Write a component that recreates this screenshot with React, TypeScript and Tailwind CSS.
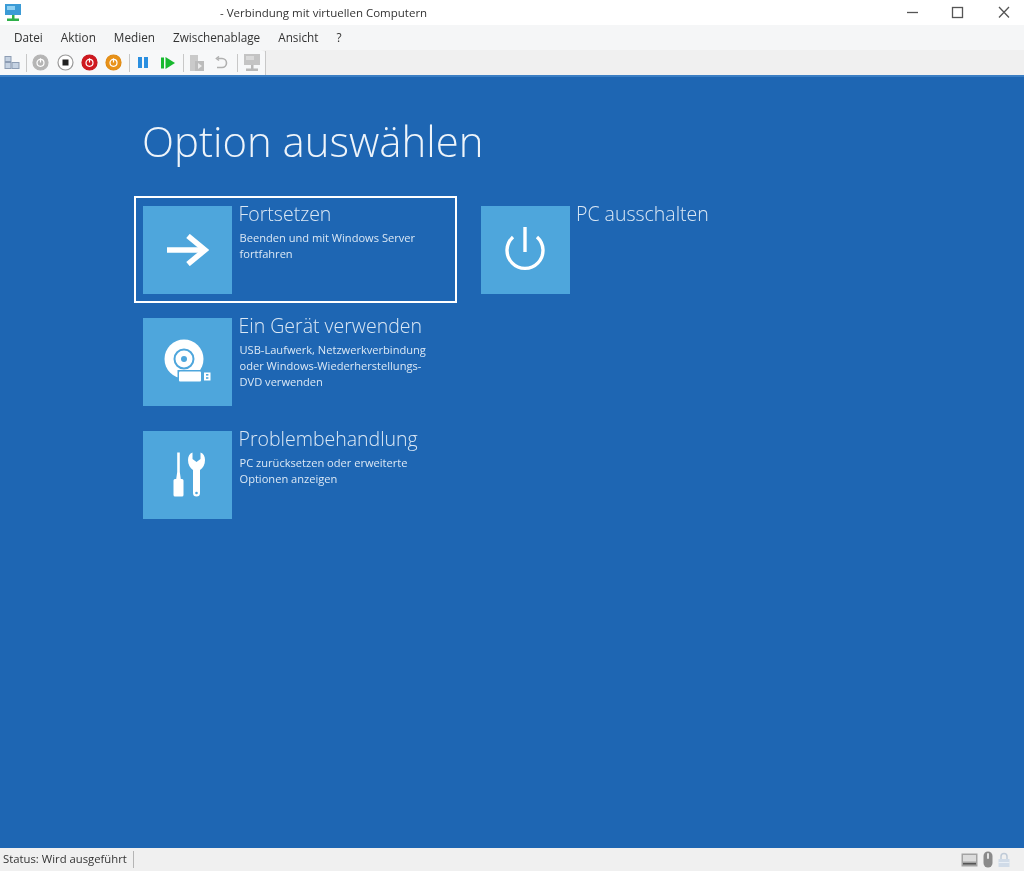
import React from "react";

const UI_FONT = "font-['Open_Sans','Liberation_Sans',sans-serif]";

function ArrowIcon() {
  return (
    <svg width="42" height="32" viewBox="0 0 42 32" fill="none" stroke="#fff" strokeWidth="5.5">
      <path d="M0 16H38" />
      <path d="M21 2L38 16L21 30" />
    </svg>
  );
}

function PowerIcon() {
  return (
    <svg width="42" height="46" viewBox="0 0 42 46" fill="none" stroke="#fff" strokeWidth="3.4">
      <path d="M9 10A18 18 0 1 0 33 10" />
      <path d="M21 0V25" />
    </svg>
  );
}

function DiscIcon() {
  return (
    <svg width="48" height="46" viewBox="0 0 48 46">
      <circle cx="20" cy="20" r="19.5" fill="#fff" />
      <circle cx="20" cy="20" r="9.5" fill="none" stroke="#4ea6dc" strokeWidth="2" />
      <circle cx="20" cy="20" r="3" fill="#4ea6dc" />
      <rect x="13.5" y="31" width="25.5" height="13.5" fill="#4ea6dc" />
      <rect x="15" y="32.5" width="22" height="10" rx="1" fill="#fff" />
      <rect x="40" y="33.5" width="6.5" height="8" fill="#fff" />
      <rect x="42" y="35" width="2.4" height="1.6" fill="#4ea6dc" />
      <rect x="42" y="38.2" width="2.4" height="1.6" fill="#4ea6dc" />
    </svg>
  );
}

function ToolsIcon() {
  return (
    <svg width="34" height="46" viewBox="0 0 34 46" fill="#fff">
      <path d="M6.2 0.500H8.800V20L9.800 27H11A1.500 1.500 0 0 1 12.500 28.500V43A1.500 1.500 0 0 1 11 44.500H4A1.500 1.500 0 0 1 2.500 43V28.500A1.500 1.500 0 0 1 4 27H5.200L6.200 20Z" />
      <path d="M21.500 0.500V7L25.500 10L29.500 7V0.500C32.500 1.500 34 4.500 34 8C34 12.500 32 16 29 18V41A3.500 3.500 0 0 1 22 41V18C19 16 17 12.500 17 8C17 4.500 18.500 1.500 21.500 0.500Z" />
      <circle cx="25.500" cy="41" r="1.300" fill="#4ea6dc" />
    </svg>
  );
}

function OptionCard({
  icon,
  title,
  text,
  selected,
}: {
  icon: React.ReactNode;
  title: string;
  text?: string[];
  selected?: boolean;
}) {
  return (
    <div
      className={`flex h-[107px] w-[323px] border-2 pl-[7px] pt-[8px] ${
        selected ? "border-white" : "border-transparent"
      }`}
    >
      <div className="flex h-[88px] w-[89px] shrink-0 items-center justify-center bg-[#4ea6dc]">
        {icon}
      </div>
      <div className="ml-[6.500px]">
        <div className="-mt-[6px] whitespace-nowrap text-[19.500px] leading-[28px] font-light text-[#dbe8f5]">
          {title}
        </div>
        <div className="ml-[1px] mt-[2px] text-[11.100px] leading-[16px] text-[#dbe8f5]">
          {text?.map((line) => (
            <div key={line} className="whitespace-nowrap">
              {line}
            </div>
          ))}
        </div>
      </div>
    </div>
  );
}

function RoundButton({ ring, fill, inner }: { ring: string; fill: string; inner: "power" | "stop" }) {
  return (
    <svg width="17" height="17" viewBox="0 0 17 17">
      <circle cx="8.500" cy="8.500" r="7.500" fill={fill} stroke={ring} strokeWidth="1.200" />
      {inner === "stop" ? (
        <rect x="5.500" y="5.500" width="6" height="6" fill="#222" />
      ) : (
        <>
          <circle cx="8.500" cy="8.800" r="3.500" fill="none" stroke="#fff" strokeWidth="1.200" />
          <path d="M8.500 4.300V8.500" stroke="#fff" strokeWidth="1.200" />
        </>
      )}
    </svg>
  );
}

function ToolSep() {
  return <div className="h-[18px] w-px bg-[#c8c8c8]" />;
}

function MonitorIcon({ muted }: { muted?: boolean }) {
  const body = muted ? "#c4c4c4" : "#3b9bd6";
  const base = muted ? "#b8b8b8" : "#2eb04a";
  return (
    <svg width="20" height="20" viewBox="0 0 20 20">
      <rect x="2" y="1" width="16" height="11" fill={body} />
      <rect x="4" y="3" width="8" height="4" fill={muted ? "#dadada" : "#8ed0f2"} />
      <rect x="9" y="12" width="2.500" height="4" fill={base} />
      <rect x="4" y="15.500" width="12" height="2.500" fill={base} />
    </svg>
  );
}

export default function App() {
  return (
    <div className={`flex h-[871px] w-[1024px] flex-col overflow-hidden bg-white blur-[0.5px] ${UI_FONT}`}>
      {/* Title bar */}
      <div className="relative flex h-[25px] shrink-0 items-center bg-white">
        <div className="ml-[3px]">
          <MonitorIcon />
        </div>
        <span className="ml-[197px] text-[11.500px] text-[#333]">- Verbindung mit virtuellen Computern</span>
        <div className="ml-auto flex items-center">
          <svg width="124" height="25" viewBox="0 0 124 25" fill="none" stroke="#555" strokeWidth="1.300">
            <path d="M7 12.500H18" />
            <rect x="52.500" y="7.500" width="10" height="10" />
            <path d="M99 7L109 17.500M109 7L99 17.500" />
          </svg>
        </div>
      </div>

      {/* Menu */}
      <div className="flex h-[25px] shrink-0 items-center gap-[18px] bg-[#f5f6f7] pl-[14px] text-[11.750px] text-[#333]">
        <span>Datei</span>
        <span>Aktion</span>
        <span>Medien</span>
        <span>Zwischenablage</span>
        <span>Ansicht</span>
        <span>?</span>
      </div>

      {/* Toolbar */}
      <div className="flex h-[25px] shrink-0 bg-[#f0f0f0]">
        <div className="flex w-[266px] items-center rounded-tr-md bg-[#f7f8f9] pl-[4px]">
          <svg width="16" height="15" viewBox="0 0 16 15" fill="#c5d2e2" stroke="#8d9db4" strokeWidth="1">
            <rect x="1" y="1.500" width="6" height="5" />
            <rect x="1" y="7.500" width="6" height="6" />
            <rect x="8" y="7.500" width="7" height="6" />
          </svg>
          <div className="ml-[6px]">
            <ToolSep />
          </div>
          <div className="ml-[5px] flex">
            <RoundButton ring="#b5b5b5" fill="#b5b5b5" inner="power" />
          </div>
          <div className="ml-[8px] flex">
            <RoundButton ring="#9a9a9a" fill="#fff" inner="stop" />
          </div>
          <div className="ml-[7px] flex">
            <RoundButton ring="#c5161d" fill="#d0181f" inner="power" />
          </div>
          <div className="ml-[7px] flex">
            <RoundButton ring="#e08a12" fill="#e8921a" inner="power" />
          </div>
          <div className="ml-[7px]">
            <ToolSep />
          </div>
          <svg width="12" height="11" viewBox="0 0 12 11" fill="#2b8fe0" className="ml-[7px]">
            <rect x="1" y="0" width="4" height="11" />
            <rect x="7" y="0" width="4" height="11" />
          </svg>
          <svg width="15" height="12" viewBox="0 0 15 12" fill="#17b92e" className="ml-[12px]">
            <rect x="0" y="0.500" width="3" height="11" />
            <path d="M4.500 0L14 6L4.500 12Z" />
          </svg>
          <div className="ml-[7px]">
            <ToolSep />
          </div>
          <svg width="16" height="18" viewBox="0 0 16 18" fill="#cacaca" className="ml-[5px]">
            <rect x="1" y="1" width="8" height="16" />
            <rect x="6" y="7" width="9" height="10" fill="#bcbcbc" />
            <path d="M9 9L13 12L9 15Z" fill="#ececec" />
          </svg>
          <svg width="14" height="14" viewBox="0 0 14 14" fill="none" stroke="#b0b0b0" strokeWidth="1.600" className="ml-[9px]">
            <path d="M4 2.500H8A4 4 0 0 1 8 11.500H3" />
            <path d="M5 0.500L2.500 2.500L5 4.500" />
          </svg>
          <div className="ml-[9px]">
            <ToolSep />
          </div>
          <div className="ml-[4px] flex">
            <MonitorIcon muted />
          </div>
          <div className="ml-auto h-[24px] w-px bg-[#c8c8c8]" />
        </div>
      </div>

      {/* VM screen */}
      <div className="flex-1 border-t-2 border-[#3c7fc4] bg-[#1e66b3] pl-[134px] pt-[34px]">
        <h1 className="ml-[8px] whitespace-nowrap text-[41.900px] leading-[60px] font-light text-[#eef4fa]">
          Option auswählen
        </h1>
        <div className="mt-[25px] flex gap-[14.500px]">
          <div className="flex flex-col gap-[5.400px]">
            <OptionCard
              selected
              icon={<ArrowIcon />}
              title="Fortsetzen"
              text={["Beenden und mit Windows Server", "fortfahren"]}
            />
            <OptionCard
              icon={<DiscIcon />}
              title="Ein Gerät verwenden"
              text={["USB-Laufwerk, Netzwerkverbindung", "oder Windows-Wiederherstellungs-", "DVD verwenden"]}
            />
            <OptionCard
              icon={<ToolsIcon />}
              title="Problembehandlung"
              text={["PC zurücksetzen oder erweiterte", "Optionen anzeigen"]}
            />
          </div>
          <div>
            <OptionCard icon={<PowerIcon />} title="PC ausschalten" />
          </div>
        </div>
      </div>

      {/* Status bar */}
      <div className="flex h-[23px] shrink-0 items-center bg-[#f0f0f0] pl-[3px] text-[11.300px] text-[#333]">
        <span>Status: Wird ausgeführt</span>
        <div className="ml-[6px] h-[17px] w-px bg-[#b5b5b5]" />
        <div className="ml-auto mr-[14px] flex items-center gap-[5px]">
          <svg width="17" height="14" viewBox="0 0 17 14">
            <rect x="0.500" y="0.500" width="16" height="13" fill="#a3a3a3" />
            <rect x="2" y="2" width="13" height="6.500" fill="#dcdcdc" />
            <rect x="2" y="10" width="13" height="1.500" fill="#555" />
          </svg>
          <svg width="10" height="17" viewBox="0 0 10 17">
            <rect x="0.500" y="0.500" width="9" height="16" rx="4.500" fill="#8a8a8a" />
            <rect x="4" y="2" width="2" height="6" rx="1" fill="#e5e5e5" />
          </svg>
          <svg width="12" height="16" viewBox="0 0 12 16">
            <path d="M3 7V4.500a3 3 0 0 1 6 0V7" fill="none" stroke="#c0cbd8" strokeWidth="1.500" />
            <rect x="0.500" y="7" width="11" height="8" fill="#d0dbe8" />
            <rect x="0.500" y="10" width="11" height="1" fill="#e9eff6" />
          </svg>
        </div>
      </div>
    </div>
  );
}
